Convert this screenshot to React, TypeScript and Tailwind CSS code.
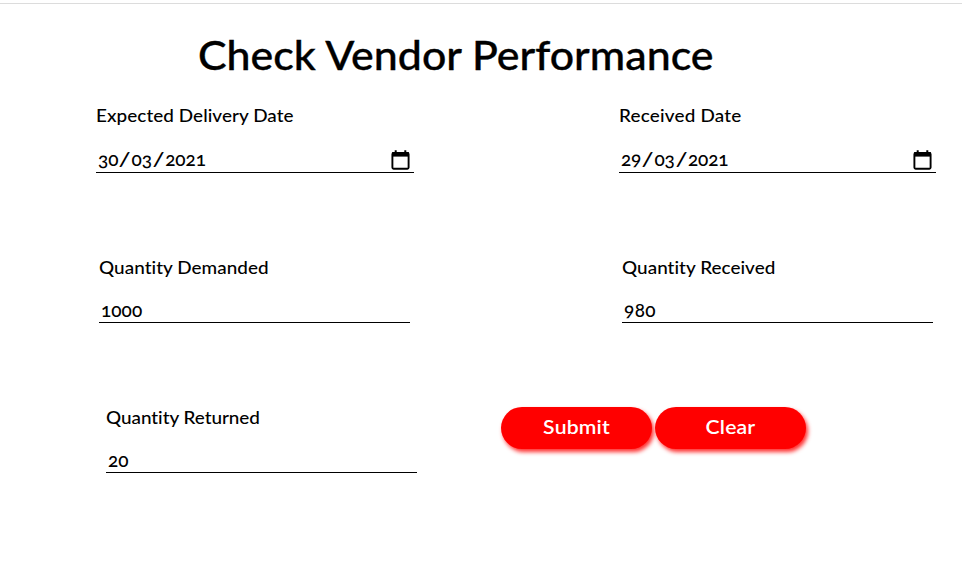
type FieldProps = {
  label: string;
  value: string;
  date?: boolean;
  className: string;
  labelClass: string;
  valueClass?: string;
};

function CalendarIcon() {
  return (
    <svg className="mr-1 mb-px h-5 w-[19px] shrink-0" viewBox="0 0 19 20" fill="none">
      <rect x="1.4" y="3" width="16.2" height="15.8" rx="1.2" stroke="#000" strokeWidth="1.9" />
      <path d="M1 2.2H18V6.6H1Z" fill="#000" />
      <path d="M4.7 0.2V3M14.3 0.2V3" stroke="#000" strokeWidth="2" />
    </svg>
  );
}

function DateText({ value }: { value: string }) {
  return (
    <>
      {value.split("/").map((part, i) => (
        <span key={i}>
          {i > 0 && <span className="mx-px inline-block scale-x-140 px-[1.3px] tracking-normal">/</span>}
          {part}
        </span>
      ))}
    </>
  );
}

function Field({ label, value, date, className, labelClass, valueClass = "" }: FieldProps) {
  return (
    <div className={className}>
      <label className={`block h-6 w-fit origin-left scale-x-105 text-[18px] leading-6 font-medium whitespace-nowrap ${labelClass}`}>
        {label}
      </label>
      <div className={`flex items-center justify-between border-b border-black pl-0.5 ${date ? "mt-[22px] h-6" : "mt-5 h-6"}`}>
        <span className={`text-[19px] leading-6 font-medium whitespace-nowrap oldstyle-nums ${date ? "pb-[3px]" : "pb-[2px]"} ${valueClass}`}>
          {date ? <DateText value={value} /> : value}
        </span>
        {date && <CalendarIcon />}
      </div>
    </div>
  );
}

function PillButton({ label }: { label: string }) {
  return (
    <button
      type="button"
      className="h-[42px] w-[151px] rounded-full bg-[#ff0000] pb-1 text-[20px] font-semibold tracking-[0.15px] text-white shadow-[2px_3px_4px_#ff0000d0]"
    >
      <span className="inline-block scale-x-106">{label}</span>
    </button>
  );
}

export default function App() {
  return (
    <main className="h-[581px] w-[962px] overflow-hidden bg-white pt-[3px] font-['Lato','Open_Sans',sans-serif] text-black">
      <div className="border-t border-[#dcdcdc]" />
      <h1 className="mt-[26px] ml-[198px] h-[50px] w-fit origin-left scale-x-[1.045] text-[41px] leading-[50px] font-medium tracking-[0.02px] whitespace-nowrap [-webkit-text-stroke:0.35px_black]">
        Check Vendor Performance
      </h1>
      <div className="mt-[23px] flex pl-24">
        <Field date label="Expected Delivery Date" value="30/03/2021" className="w-[318px]" labelClass="tracking-[0.05px]" valueClass="tracking-[-0.1px]" />
        <Field date label="Received Date" value="29/03/2021" className="ml-[205px] w-[317px]" labelClass="tracking-[0.19px]" valueClass="tracking-[-0.15px]" />
      </div>
      <div className="mt-[82px] flex pl-[99px]">
        <Field label="Quantity Demanded" value="1000" className="w-[311px]" labelClass="tracking-[0.04px]" valueClass="tracking-[0.05px]" />
        <Field label="Quantity Received" value="980" className="ml-[212px] w-[311px]" labelClass="tracking-[0.03px]" valueClass="tracking-[0.4px]" />
      </div>
      <div className="mt-[82px] flex pl-[106px]">
        <Field label="Quantity Returned" value="20" className="w-[311px]" labelClass="tracking-[-0.04px]" valueClass="tracking-[0.1px]" />
        <div className="mt-[2px] ml-[84px] flex items-start gap-[3px]">
          <PillButton label="Submit" />
          <PillButton label="Clear" />
        </div>
      </div>
    </main>
  );
}
